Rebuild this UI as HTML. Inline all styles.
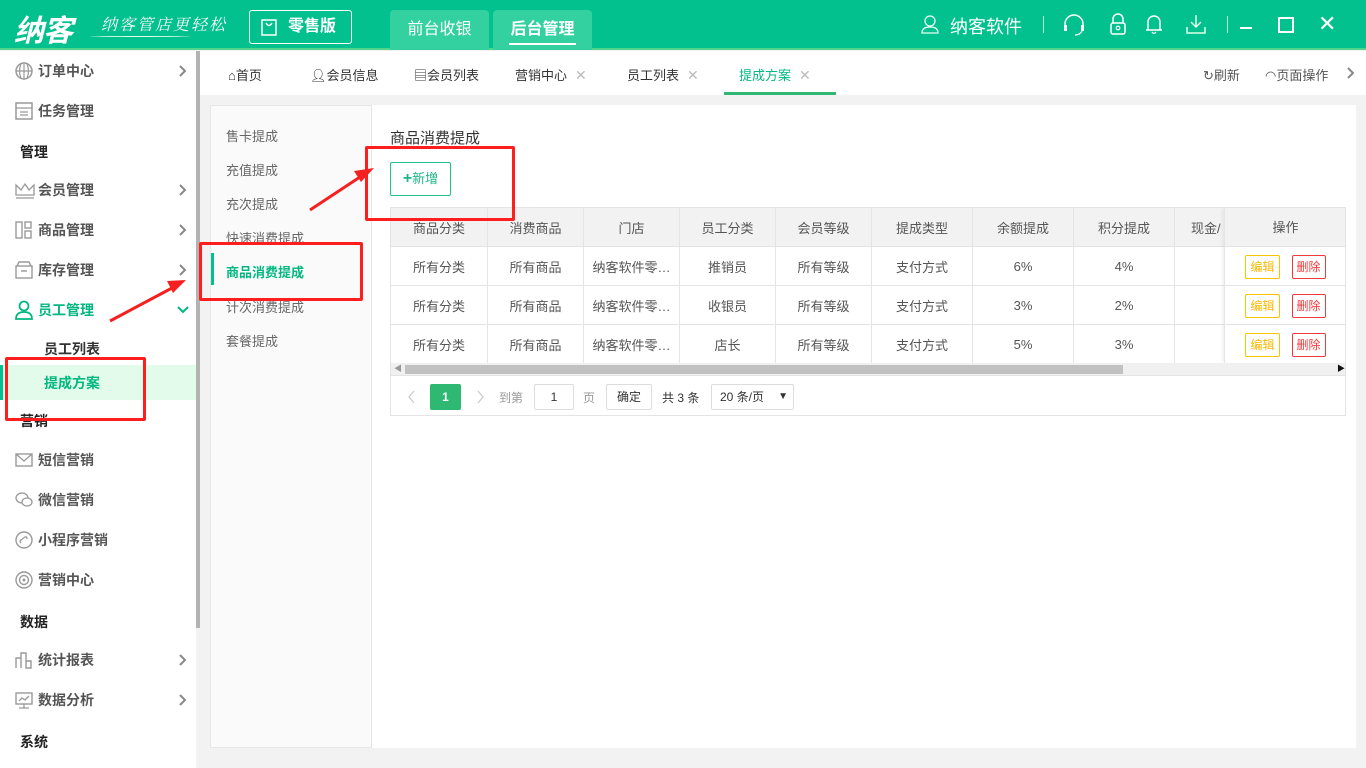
<!DOCTYPE html>
<html><head><meta charset="utf-8">
<style>
*{margin:0;padding:0;box-sizing:border-box}
body{width:1366px;height:768px;overflow:hidden;background:#f2f2f2;font-family:"Liberation Sans","Noto Sans CJK SC",sans-serif;font-size:13px;color:#333;position:relative}
.abs{position:absolute}
#hdr{left:0;top:0;width:1366px;height:50px;background:#02c18e;border-bottom:2px solid #4fd68a}
#side{left:0;top:51px;width:196px;height:717px;background:#fff}
.si{position:absolute;left:0;width:196px;height:40px;line-height:40px;font-size:14px;font-weight:bold;color:#555;padding-left:38px}
.si svg{position:absolute;left:14px;top:10px}
.si .ar{position:absolute;right:6px;top:13px;width:14px;height:14px}
.sh{position:absolute;left:20px;font-size:14px;font-weight:bold;color:#222}
#tabs{left:200px;top:51px;width:1166px;height:44px;background:#fff}
.tb{position:absolute;top:14px;font-size:13px;color:#333}
.tb .x{color:#bbb;margin-left:8px;font-size:14px}
.rbox{position:absolute;border:3px solid #ff1e1e;border-radius:2px}
table{border-collapse:collapse;table-layout:fixed}
td,th{border:1px solid #e4e4e4;height:39px;text-align:center;font-weight:normal;color:#555;font-size:13px;white-space:nowrap;overflow:hidden}
th{background:#f2f2f2}
.be{display:inline-block;border:1px solid #f9c400;color:#f9b800;font-size:12px;height:24px;line-height:22px;padding:0 4px;border-radius:2px;margin:0 6px}
.bd{display:inline-block;border:1px solid #f23a3a;color:#f23a3a;font-size:12px;height:24px;line-height:22px;padding:0 4px;border-radius:2px;margin:0 6px}
.sub{position:absolute;left:226px;font-size:13px;color:#666}
</style></head><body>
<div id="hdr" class="abs">
  <div class="abs" style="left:14px;top:6px;font-size:30px;font-weight:bold;color:#fff;font-style:italic;letter-spacing:-1px">纳客</div>
  <div class="abs" style="left:101px;top:12px;font-size:16px;color:#fff;font-family:'Liberation Serif','Noto Serif CJK SC',serif;font-style:italic;letter-spacing:2px">纳客管店更轻松</div>
  <div class="abs" style="left:90px;top:36px;width:100px;height:2px;border-top:1px solid #dfffe9;border-radius:50%"></div>
  <div class="abs" style="left:249px;top:10px;width:103px;height:34px;border:1.5px solid #fff;border-radius:3px;color:#fff;font-size:16px;font-weight:bold;line-height:31px;padding-left:38px">零售版
    <svg class="abs" style="left:10px;top:7px" width="18" height="18" viewBox="0 0 18 18"><rect x="2" y="2" width="14" height="15" fill="none" stroke="#fff" stroke-width="1.5"/><path d="M6 5q3 5 6 0" fill="none" stroke="#fff" stroke-width="1.5"/></svg></div>
  <div class="abs" style="left:390px;top:10px;width:99px;height:40px;background:#33d19f;border-radius:4px 4px 0 0;color:#fff;font-size:16px;text-align:center;line-height:40px">前台收银</div>
  <div class="abs" style="left:493px;top:10px;width:99px;height:40px;background:#33d19f;border-radius:4px 4px 0 0;color:#fff;font-size:16px;font-weight:bold;text-align:center;line-height:40px">后台管理<div class="abs" style="left:16px;top:33px;width:67px;height:2px;background:#fff"></div></div>
  <svg class="abs" style="left:920px;top:14px" width="20" height="20" viewBox="0 0 20 20"><circle cx="10" cy="7" r="5" fill="none" stroke="#e8fff5" stroke-width="1.3"/><path d="M2 19q0-6 8-6t8 6z" fill="none" stroke="#e8fff5" stroke-width="1.3"/></svg>
  <div class="abs" style="left:950px;top:13px;color:#fff;font-size:18px">纳客软件</div>
  <div class="abs" style="left:1043px;top:16px;width:1px;height:17px;background:#b8f0d8"></div>
  <svg class="abs" style="left:1062px;top:14px" width="24" height="22" viewBox="0 0 24 22"><path d="M3 13V10a9 9 0 0 1 18 0v3" fill="none" stroke="#fff" stroke-width="1.5"/><rect x="2" y="11" width="3" height="6" fill="#fff"/><rect x="19" y="11" width="3" height="6" fill="#fff"/><path d="M20 17q-2 4-7 4" fill="none" stroke="#fff" stroke-width="1.3"/></svg>
  <svg class="abs" style="left:1109px;top:13px" width="18" height="22" viewBox="0 0 18 22"><path d="M4 10V6a5 5 0 0 1 10 0v4" fill="none" stroke="#fff" stroke-width="1.5"/><rect x="2" y="10" width="14" height="11" rx="2" fill="none" stroke="#fff" stroke-width="1.5"/><circle cx="9" cy="15" r="1.8" fill="none" stroke="#fff" stroke-width="1.2"/></svg>
  <svg class="abs" style="left:1145px;top:13px" width="18" height="22" viewBox="0 0 18 22"><path d="M3 17V9a6 6 0 0 1 12 0v8h2H1z" fill="none" stroke="#fff" stroke-width="1.5"/><path d="M7 19q2 3 4 0" fill="none" stroke="#fff" stroke-width="1.3"/></svg>
  <svg class="abs" style="left:1185px;top:13px" width="22" height="22" viewBox="0 0 22 22"><path d="M11 2v12M6 9l5 5 5-5M2 14v6h18v-6" fill="none" stroke="#e0ffe8" stroke-width="1.5"/></svg>
  <div class="abs" style="left:1227px;top:16px;width:1px;height:17px;background:#b8f0d8"></div>
  <div class="abs" style="left:1240px;top:27px;width:12px;height:2px;background:#fff"></div>
  <div class="abs" style="left:1278px;top:17px;width:16px;height:16px;border:2px solid #fff"></div>
  <div class="abs" style="left:1318px;top:11px;color:#fff;font-size:22px">✕</div>
</div>

<div id="side" class="abs">
  <div class="si" style="top:0"><svg width="20" height="20" viewBox="0 0 20 20"><circle cx="10" cy="10" r="8" fill="none" stroke="#999" stroke-width="1.5"/><path d="M2 10h16M10 2v16M7 3q-3 7 0 14M13 3q3 7 0 14" fill="none" stroke="#999" stroke-width="1.2"/></svg>订单中心<svg class="ar" style="left:auto" viewBox="0 0 14 14"><path d="M4 2l5 5-5 5" fill="none" stroke="#888" stroke-width="2"/></svg></div>
  <div class="si" style="top:40px"><svg width="20" height="20" viewBox="0 0 20 20"><rect x="2" y="2" width="16" height="16" fill="none" stroke="#999" stroke-width="1.5"/><path d="M2 7h16M6 11h8M6 14h8" stroke="#999" stroke-width="1.3"/></svg>任务管理</div>
  <div class="sh" style="top:91px">管理</div>
  <div class="si" style="top:119px"><svg width="22" height="20" viewBox="0 0 22 20"><path d="M2 15V5l5 5 4-6 4 6 5-5v10z" fill="none" stroke="#999" stroke-width="1.3"/><path d="M2 18h18" stroke="#999" stroke-width="1.3"/></svg>会员管理<svg class="ar" style="left:auto" viewBox="0 0 14 14"><path d="M4 2l5 5-5 5" fill="none" stroke="#888" stroke-width="2"/></svg></div>
  <div class="si" style="top:159px"><svg width="20" height="20" viewBox="0 0 20 20"><rect x="2" y="2" width="6" height="16" fill="none" stroke="#999" stroke-width="1.4"/><rect x="11" y="2" width="6" height="6" fill="none" stroke="#999" stroke-width="1.4"/><rect x="11" y="11" width="6" height="7" fill="none" stroke="#999" stroke-width="1.4"/></svg>商品管理<svg class="ar" style="left:auto" viewBox="0 0 14 14"><path d="M4 2l5 5-5 5" fill="none" stroke="#888" stroke-width="2"/></svg></div>
  <div class="si" style="top:199px"><svg width="20" height="20" viewBox="0 0 20 20"><path d="M3 6l2-4h10l2 4" fill="none" stroke="#999" stroke-width="1.4"/><rect x="2" y="6" width="16" height="12" fill="none" stroke="#999" stroke-width="1.4"/><path d="M7 11h6" stroke="#999" stroke-width="1.4"/></svg>库存管理<svg class="ar" style="left:auto" viewBox="0 0 14 14"><path d="M4 2l5 5-5 5" fill="none" stroke="#888" stroke-width="2"/></svg></div>
  <div class="si" style="top:239px;color:#02b880"><svg width="20" height="20" viewBox="0 0 20 20"><circle cx="10" cy="6" r="4.5" fill="none" stroke="#02b880" stroke-width="1.8"/><path d="M2 19q0-7 8-7t8 7z" fill="none" stroke="#02b880" stroke-width="1.8"/></svg>员工管理<svg class="ar" style="left:auto" viewBox="0 0 14 14"><path d="M2 4l5 5 5-5" fill="none" stroke="#02b880" stroke-width="2"/></svg></div>
  <div class="abs" style="left:44px;top:288px;font-size:14px;font-weight:bold;color:#333">员工列表</div>
  <div class="abs" style="left:0;top:314px;width:196px;height:35px;background:#e3fbea;border-left:3px solid #02c18e"></div>
  <div class="abs" style="left:44px;top:322px;font-size:14px;font-weight:bold;color:#02b880">提成方案</div>
  <div class="sh" style="top:360px">营销</div>
  <div class="si" style="top:389px"><svg width="20" height="20" viewBox="0 0 20 20"><rect x="2" y="4" width="16" height="12" fill="none" stroke="#999" stroke-width="1.4"/><path d="M2 4l8 7 8-7" fill="none" stroke="#999" stroke-width="1.4"/></svg>短信营销</div>
  <div class="si" style="top:429px"><svg width="20" height="20" viewBox="0 0 20 20"><ellipse cx="8" cy="8" rx="6" ry="5" fill="none" stroke="#999" stroke-width="1.3"/><ellipse cx="13" cy="12" rx="5" ry="4" fill="#fff" stroke="#999" stroke-width="1.3"/></svg>微信营销</div>
  <div class="si" style="top:469px"><svg width="20" height="20" viewBox="0 0 20 20"><circle cx="10" cy="10" r="8" fill="none" stroke="#999" stroke-width="1.4"/><path d="M7 13q-2-2 0-3l4-3q2-1 2 2" fill="none" stroke="#999" stroke-width="1.3"/></svg>小程序营销</div>
  <div class="si" style="top:509px"><svg width="20" height="20" viewBox="0 0 20 20"><circle cx="10" cy="10" r="8" fill="none" stroke="#999" stroke-width="1.4"/><circle cx="10" cy="10" r="4.5" fill="none" stroke="#999" stroke-width="1.4"/><circle cx="10" cy="10" r="1.5" fill="#999"/></svg>营销中心</div>
  <div class="sh" style="top:561px">数据</div>
  <div class="si" style="top:589px"><svg width="20" height="20" viewBox="0 0 20 20"><path d="M2 18V8h5v10M7 18V3h5v15M12 18v-7h5v7z" fill="none" stroke="#999" stroke-width="1.4"/></svg>统计报表<svg class="ar" style="left:auto" viewBox="0 0 14 14"><path d="M4 2l5 5-5 5" fill="none" stroke="#888" stroke-width="2"/></svg></div>
  <div class="si" style="top:629px"><svg width="20" height="20" viewBox="0 0 20 20"><rect x="2" y="3" width="16" height="11" fill="none" stroke="#999" stroke-width="1.4"/><path d="M10 14v4M5 18h10M5 11l3-3 3 2 4-4" fill="none" stroke="#999" stroke-width="1.3"/></svg>数据分析<svg class="ar" style="left:auto" viewBox="0 0 14 14"><path d="M4 2l5 5-5 5" fill="none" stroke="#888" stroke-width="2"/></svg></div>
  <div class="sh" style="top:681px">系统</div>
</div>
<div class="abs" style="left:196px;top:51px;width:4px;height:717px;background:#f2f2f2"></div>
<div class="abs" style="left:196px;top:51px;width:4px;height:577px;background:#b3b3b3"></div>

<div id="tabs" class="abs">
  <div class="tb" style="left:28px">⌂首页</div>
  <div class="tb" style="left:110px">👤︎会员信息</div>
  <div class="tb" style="left:214px">▤会员列表</div>
  <div class="tb" style="left:315px">营销中心<span class="x">✕</span></div>
  <div class="tb" style="left:427px">员工列表<span class="x">✕</span></div>
  <div class="tb" style="left:539px;color:#02b880">提成方案<span class="x">✕</span></div>
  <div class="abs" style="left:524px;top:41px;width:112px;height:3px;background:#2eb872"></div>
  <div class="tb" style="left:1003px;color:#555">↻刷新</div>
  <div class="tb" style="left:1065px;color:#555">◠页面操作</div>
  <svg class="abs" style="left:1145px;top:16px" width="12" height="12" viewBox="0 0 12 12"><path d="M3 1l5 5-5 5" fill="none" stroke="#888" stroke-width="2"/></svg>
</div>

<div class="abs" style="left:210px;top:105px;width:162px;height:643px;background:#fafafa;border:1px solid #e6e6e6"></div>
<div class="sub" style="top:126px">售卡提成</div>
<div class="sub" style="top:160px">充值提成</div>
<div class="sub" style="top:194px">充次提成</div>
<div class="sub" style="top:228px">快速消费提成</div>
<div class="abs" style="left:211px;top:253px;width:3px;height:32px;background:#02c18e"></div>
<div class="sub" style="top:262px;color:#02b880;font-weight:bold">商品消费提成</div>
<div class="sub" style="top:297px">计次消费提成</div>
<div class="sub" style="top:331px">套餐提成</div>

<div class="abs" style="left:372px;top:105px;width:984px;height:643px;background:#fff"></div>
<div class="abs" style="left:390px;top:127px;font-size:15px;color:#333">商品消费提成</div>
<div class="abs" style="left:390px;top:162px;width:61px;height:34px;border:1px solid #1fc28d;border-radius:2px;color:#1fb586;font-size:13px;line-height:32px;text-align:center"><b style="font-size:16px">+</b>新增</div>

<div class="abs" style="left:390px;top:207px;width:956px;height:209px;border:1px solid #e4e4e4;overflow:hidden">
<table style="width:1000px;margin:-1px 0 0 -1px">
<colgroup><col style="width:97px"><col style="width:96px"><col style="width:96px"><col style="width:96px"><col style="width:96px"><col style="width:101px"><col style="width:101px"><col style="width:101px"><col style="width:216px"></colgroup>
<tr><th>商品分类</th><th>消费商品</th><th>门店</th><th>员工分类</th><th>会员等级</th><th>提成类型</th><th>余额提成</th><th>积分提成</th><th style="text-align:left;padding-left:16px">现金/</th></tr>
<tr><td>所有分类</td><td>所有商品</td><td>纳客软件零…</td><td>推销员</td><td>所有等级</td><td>支付方式</td><td>6%</td><td>4%</td><td></td></tr>
<tr><td>所有分类</td><td>所有商品</td><td>纳客软件零…</td><td>收银员</td><td>所有等级</td><td>支付方式</td><td>3%</td><td>2%</td><td></td></tr>
<tr><td>所有分类</td><td>所有商品</td><td>纳客软件零…</td><td>店长</td><td>所有等级</td><td>支付方式</td><td>5%</td><td>3%</td><td></td></tr>
</table>
<div class="abs" style="left:833px;top:0;width:122px;height:155px;background:#fff;border-left:1px solid #e4e4e4;box-shadow:-2px 0 3px rgba(0,0,0,.05)">
  <div style="height:39px;background:#f2f2f2;border-bottom:1px solid #e4e4e4;text-align:center;line-height:39px;color:#555">操作</div>
  <div style="height:39px;border-bottom:1px solid #e4e4e4;text-align:center;padding-top:8px"><span class="be">编辑</span><span class="bd">删除</span></div>
  <div style="height:39px;border-bottom:1px solid #e4e4e4;text-align:center;padding-top:8px"><span class="be">编辑</span><span class="bd">删除</span></div>
  <div style="height:38px;text-align:center;padding-top:8px"><span class="be">编辑</span><span class="bd">删除</span></div>
</div>
<div class="abs" style="left:0;top:155px;width:956px;height:13px;background:#f0f0f0;border-bottom:1px solid #e4e4e4"></div>
<div class="abs" style="left:14px;top:157px;width:718px;height:9px;background:#c1c1c1"></div>
<div class="abs" style="left:3px;top:155px;font-size:8px;color:#999">◀</div>
<div class="abs" style="left:946px;top:155px;font-size:8px;color:#111">▶</div>
<svg class="abs" style="left:16px;top:182px" width="10" height="14" viewBox="0 0 10 14"><path d="M7 1L2 7l5 6" fill="none" stroke="#ccc" stroke-width="1.3"/></svg>
<div class="abs" style="left:39px;top:176px;width:31px;height:26px;background:#2eb872;border-radius:2px;color:#fff;font-weight:bold;text-align:center;line-height:26px;font-size:12px">1</div>
<svg class="abs" style="left:84px;top:182px" width="10" height="14" viewBox="0 0 10 14"><path d="M3 1l5 6-5 6" fill="none" stroke="#ccc" stroke-width="1.3"/></svg>
<div class="abs" style="left:108px;top:181px;color:#999;font-size:12px">到第</div>
<div class="abs" style="left:143px;top:176px;width:40px;height:26px;border:1px solid #ddd;border-radius:2px;text-align:center;line-height:24px;font-size:12px">1</div>
<div class="abs" style="left:192px;top:181px;color:#999;font-size:12px">页</div>
<div class="abs" style="left:215px;top:176px;width:46px;height:26px;border:1px solid #ddd;border-radius:2px;text-align:center;line-height:24px;font-size:12px">确定</div>
<div class="abs" style="left:271px;top:181px;color:#333;font-size:12px">共 3 条</div>
<div class="abs" style="left:320px;top:176px;width:83px;height:26px;border:1px solid #ddd;border-radius:2px;line-height:24px;font-size:12px;padding-left:8px">20 条/页<span style="position:absolute;right:5px;font-size:10px">▼</span></div>
</div>

<div class="rbox" style="left:365px;top:146px;width:150px;height:75px"></div>
<div class="rbox" style="left:199px;top:242px;width:164px;height:59px"></div>
<div class="rbox" style="left:5px;top:357px;width:141px;height:64px"></div>
<svg class="abs" style="left:0;top:0" width="400" height="400" viewBox="0 0 400 400">
<path d="M110 321L172 288" stroke="#f52020" stroke-width="3"/><path d="M186 280l-19 1 6 12z" fill="#f52020"/>
<path d="M310 210L360 177" stroke="#f52020" stroke-width="3"/><path d="M374 168l-20 3 7 11z" fill="#f52020"/>
</svg>
</body></html>
